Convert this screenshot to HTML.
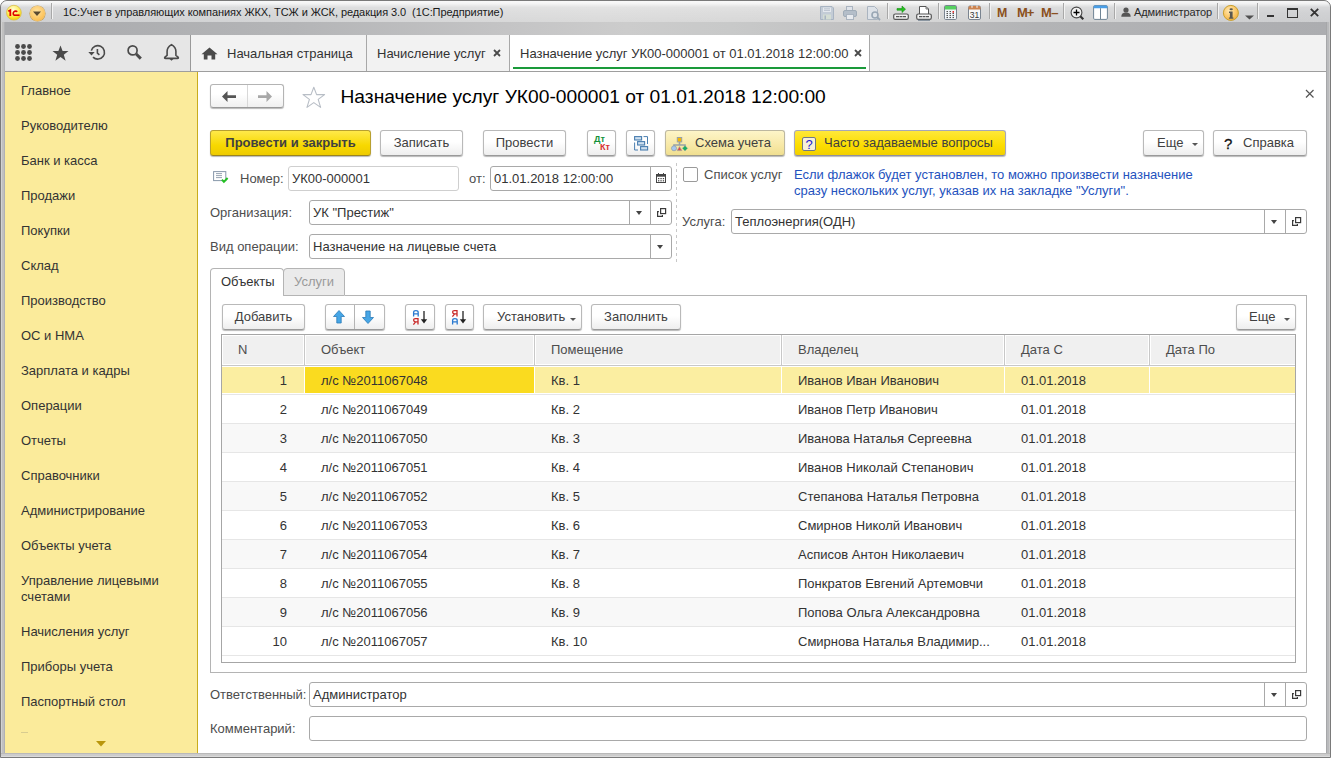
<!DOCTYPE html>
<html><head><meta charset="utf-8">
<style>
*{margin:0;padding:0;box-sizing:border-box}
html,body{width:1331px;height:758px;overflow:hidden;background:#fff}
body{position:relative;font-family:"Liberation Sans",sans-serif;font-size:13px;color:#4d4d4d}
.a{position:absolute}
.t{position:absolute;white-space:nowrap;line-height:15px}
svg{position:absolute;overflow:visible}
#frame{left:0;top:0;width:1331px;height:758px;background:#c0c0c0;border:1px solid #7a7a7a;border-radius:7px 7px 0 0}
#tb{left:1px;top:1px;width:1329px;height:21px;background:linear-gradient(rgba(255,255,255,0.85),rgba(255,255,255,0.7) 12%,rgba(255,255,255,0.15) 30%,rgba(255,255,255,0) 60%,rgba(0,0,0,0.02)),linear-gradient(90deg,#d2d3d5,#d8d9da 25%,#dedede 45%,#dadada 65%,#d4d5d6 85%,#d0d1d3);border-radius:6px 6px 0 0}
#tb2{left:5px;top:22px;width:1321px;height:13px;background:linear-gradient(90deg,#a9aaad,#b4b5b7 22%,#c4c4c5 38%,#cccccc 47%,#c8c9c9 55%,#c0c0c1 66%,#b3b4b6 78%,#acadb0 100%)}
.side-it{position:absolute;left:21px;white-space:nowrap;line-height:15px;color:#333}
.tsep{position:absolute;top:3px;width:2px;height:16px;border-left:1px solid #a8a8a8;border-right:1px solid #f2f2f2}

.btn{position:absolute;top:130px;height:26px;border:1px solid #b9b9b9;border-bottom-color:#9a9a9a;border-radius:3px;background:linear-gradient(#ffffff 45%,#eeeeee);box-shadow:0 1px 1px rgba(0,0,0,0.28);line-height:24px;text-align:center;white-space:nowrap;color:#404040}
.btn.y{background:linear-gradient(#ffe94a,#f7d800 60%,#eecb00);border-color:#b8a030 #b8a030 #9a8420;color:#404040;font-weight:bold}
.btn.ly{background:linear-gradient(#fdf5c8,#f7e8a6 60%,#f0df90);border-color:#bdb8a0 #bdb8a0 #9e9a88}
.btn.yy{background:linear-gradient(#ffe83a,#fcdd00 60%,#f2d000);border-color:#a8a8b8 #a8a8b8 #9090a0}
.dd{position:absolute;width:0;height:0;border-left:3px solid transparent;border-right:3px solid transparent;border-top:3.5px solid #555}

.fld{position:absolute;height:25px;border:1px solid #a9a9a9;border-radius:3px;background:#fff}
.fdiv{position:absolute;width:1px;background:#a9a9a9}
.lbl{position:absolute;white-space:nowrap;line-height:15px;color:#4d4d4d}
.ftx{position:absolute;white-space:nowrap;line-height:15px;color:#333}
.tri{position:absolute;width:0;height:0;border-left:4px solid transparent;border-right:4px solid transparent;border-top:4px solid #444}
</style></head><body>
<div id="frame" class="a"></div>
<div class="a" style="left:1px;top:6px;width:1px;height:751px;background:#d2d2d2"></div>
<div class="a" style="left:2px;top:6px;width:2px;height:751px;background:#c0c0c0"></div>
<div class="a" style="left:4px;top:22px;width:1px;height:735px;background:#b0b1b4"></div>
<div class="a" style="left:1326px;top:22px;width:1px;height:735px;background:#a6a7a9"></div>
<div class="a" style="left:1327px;top:6px;width:2px;height:751px;background:#b9babc"></div>
<div class="a" style="left:1329px;top:6px;width:1px;height:751px;background:#cbcbcb"></div>
<div class="a" style="left:1px;top:753px;width:1329px;height:1px;background:#b9b9b9"></div>
<div class="a" style="left:1px;top:754px;width:1329px;height:2px;background:#cccccc"></div>
<div class="a" style="left:1px;top:756px;width:1329px;height:1px;background:#dadada"></div>
<div id="tb" class="a"></div>
<div id="tb2" class="a"></div>
<!-- content white -->
<div class="a" style="left:5px;top:35px;width:1321px;height:718px;background:#fff"></div>

<!-- title bar -->
<svg style="left:4px;top:3px" width="20" height="20"><defs><radialGradient id="lg" cx="45%" cy="30%" r="70%"><stop offset="0" stop-color="#fffde0"/><stop offset="0.55" stop-color="#fff060"/><stop offset="1" stop-color="#f5d000"/></radialGradient></defs><circle cx="9.9" cy="9.7" r="7.4" fill="url(#lg)" stroke="#d8bc50" stroke-width="0.8"/><path d="M4.3 8.2L6.3 7.2V12.9" fill="none" stroke="#e00000" stroke-width="1.8"/><path d="M13.3 8.8A2.3 2.3 0 1 0 9.9 12.1" fill="none" stroke="#e00000" stroke-width="1.6"/><path d="M9.6 12.2H15.6" stroke="#e00000" stroke-width="1.6"/></svg>
<div class="a" style="left:29.5px;top:5.5px;width:15px;height:15px;border-radius:50%;background:radial-gradient(circle at 45% 35%,#ffe2a0,#fcc35a 65%,#f3ad3a);box-shadow:0 0 0 0.6px #caa050"></div>
<svg style="left:32px;top:11px" width="10" height="6"><path d="M1 0.5H9L5 5z" fill="#5a4a30"/></svg>
<div class="tsep" style="left:51px"></div>
<div class="t" style="left:63px;top:6px;font-size:11px;line-height:13px;color:#1a1a1a;letter-spacing:-0.07px">1С:Учет в управляющих компаниях ЖКХ, ТСЖ и ЖСК, редакция 3.0&nbsp; (1С:Предприятие)</div>

<!-- section panel -->
<div class="a" style="left:5px;top:35px;width:185px;height:36px;background:#e6e6e6"></div>
<div class="a" style="left:190px;top:35px;width:1px;height:36px;background:#9a9a9a"></div>
<div class="a" style="left:191px;top:35px;width:1135px;height:36px;background:#f2f2f2"></div>
<div class="a" style="left:5px;top:71px;width:1321px;height:1px;background:#9e9e9e"></div>

<!-- sidebar -->
<div class="a" style="left:5px;top:72px;width:192px;height:681px;background:#fbeb9b"></div>
<div class="a" style="left:197px;top:72px;width:1px;height:681px;background:#c9ac1c"></div>
<div class="side-it" style="top:83px">Главное</div>
<div class="side-it" style="top:118px">Руководителю</div>
<div class="side-it" style="top:153px">Банк и касса</div>
<div class="side-it" style="top:188px">Продажи</div>
<div class="side-it" style="top:223px">Покупки</div>
<div class="side-it" style="top:258px">Склад</div>
<div class="side-it" style="top:293px">Производство</div>
<div class="side-it" style="top:328px">ОС и НМА</div>
<div class="side-it" style="top:363px">Зарплата и кадры</div>
<div class="side-it" style="top:398px">Операции</div>
<div class="side-it" style="top:433px">Отчеты</div>
<div class="side-it" style="top:468px">Справочники</div>
<div class="side-it" style="top:503px">Администрирование</div>
<div class="side-it" style="top:538px">Объекты учета</div>
<div class="side-it" style="top:573px">Управление лицевыми</div>
<div class="side-it" style="top:589px">счетами</div>
<div class="side-it" style="top:624px">Начисления услуг</div>
<div class="side-it" style="top:659px">Приборы учета</div>
<div class="side-it" style="top:694px">Паспортный стол</div>
<div class="a" style="left:21px;top:732px;width:7px;height:1px;background:#d8cc90"></div>
<svg style="left:96px;top:741px" width="10" height="6"><path d="M0 0H10L5 5.5z" fill="#b9960c"/></svg>
<!-- section icons -->
<svg style="left:15px;top:44px" width="18" height="18"><g fill="#4a4a4a">
<circle cx="2.5" cy="2.5" r="2.4"/><circle cx="8.5" cy="2.5" r="2.4"/><circle cx="14.5" cy="2.5" r="2.4"/>
<circle cx="2.5" cy="8.5" r="2.4"/><circle cx="8.5" cy="8.5" r="2.4"/><circle cx="14.5" cy="8.5" r="2.4"/>
<circle cx="2.5" cy="14.5" r="2.4"/><circle cx="8.5" cy="14.5" r="2.4"/><circle cx="14.5" cy="14.5" r="2.4"/></g></svg>
<svg style="left:52px;top:45px" width="17" height="17"><path d="M8.5 0.5L10.6 6.1H16.5L11.8 9.7L13.6 15.8L8.5 12L3.4 15.8L5.2 9.7L0.5 6.1H6.4z" fill="#4a4a4a"/></svg>
<svg style="left:87px;top:44px" width="19" height="17"><path d="M4.3 6.6A6.7 6.7 0 1 1 6 13.1" fill="none" stroke="#4a4a4a" stroke-width="1.6"/><path d="M10.4 5V9.2L12.4 10.8" fill="none" stroke="#4a4a4a" stroke-width="1.6"/><path d="M1.3 7.9H7.7L4.5 11.6z" fill="#4a4a4a"/></svg>
<svg style="left:127px;top:45px" width="16" height="16"><circle cx="5.6" cy="5.4" r="4.5" fill="none" stroke="#4a4a4a" stroke-width="1.7"/><path d="M9.2 9L13.8 13.6" stroke="#4a4a4a" stroke-width="3"/></svg>
<svg style="left:163px;top:43px" width="17" height="19"><path d="M8.5 1.6C5.6 3.4 4.1 5.2 4.1 8.2V12.4L1.9 14.1Q1.1 15.4 2.6 15.4H14.4Q15.9 15.4 15.1 14.1L12.9 12.4V8.2C12.9 5.2 11.4 3.4 8.5 1.6z" fill="none" stroke="#4a4a4a" stroke-width="1.6" stroke-linejoin="round"/><path d="M6.3 15.8H10.7L8.5 17.8z" fill="#4a4a4a"/></svg>

<!-- open tabs -->
<svg style="left:201px;top:47px" width="17" height="13"><path d="M8.5 0.5L16.5 7.3H14.2V12.5H10.5V8.5H6.5V12.5H2.8V7.3H0.5z" fill="#4a4a4a"/></svg>
<div class="t" style="left:227px;top:46px;color:#333">Начальная страница</div>
<div class="a" style="left:366px;top:35px;width:1px;height:36px;background:#a8a8a8"></div>
<div class="t" style="left:377px;top:46px;color:#333">Начисление услуг</div>
<svg style="left:493px;top:49px" width="8" height="8"><path d="M1 1L7 7M7 1L1 7" stroke="#4a4a4a" stroke-width="1.8"/></svg>
<div class="a" style="left:509px;top:35px;width:1px;height:36px;background:#a8a8a8"></div>
<div class="a" style="left:510px;top:35px;width:359px;height:36px;background:#fff"></div>
<div class="a" style="left:869px;top:35px;width:1px;height:36px;background:#a8a8a8"></div>
<div class="t" style="left:520px;top:46px;color:#333">Назначение услуг УК00-000001 от 01.01.2018 12:00:00</div>
<svg style="left:854px;top:49px" width="8" height="8"><path d="M1 1L7 7M7 1L1 7" stroke="#4a4a4a" stroke-width="1.8"/></svg>
<div class="a" style="left:513px;top:67px;width:353px;height:2px;background:#1a9a3a"></div>
<!-- title bar right icons -->
<svg style="left:820px;top:6px" width="14" height="14"><path d="M0.5 0.5H12L13.5 2V13.5H0.5z" fill="#c3ccd6" stroke="#a8b4c2"/><rect x="3" y="1.5" width="8" height="4.5" fill="#e4e8ee"/><path d="M4 2.8H10M4 4.4H10" stroke="#b0bac6" stroke-width="0.8"/><rect x="3" y="8.5" width="8" height="5" fill="#d4ddd4"/><rect x="4.5" y="9.5" width="1.5" height="4" fill="#a8b4c2"/></svg>
<svg style="left:843px;top:6px" width="14" height="14"><rect x="3.5" y="0.5" width="6" height="4" fill="#e0e4ea" stroke="#aab4c0"/><rect x="0.5" y="4.5" width="13" height="6" rx="1.5" fill="#b4bec9" stroke="#a0acb8"/><rect x="3.5" y="8.5" width="7" height="5" fill="#e8ebef" stroke="#aab4c0"/></svg>
<svg style="left:867px;top:6px" width="15" height="15"><path d="M0.5 0.5H7.5L10.5 3.5V13.5H0.5z" fill="#dde2e8" stroke="#aab4c0"/><circle cx="8" cy="9" r="3" fill="none" stroke="#98a6b4" stroke-width="1.6"/><path d="M10.2 11.2L13 14" stroke="#98a6b4" stroke-width="1.8"/></svg>
<div class="tsep" style="left:887px"></div>
<svg style="left:893px;top:5px" width="16" height="15"><path d="M4 3.5H9V1L12.5 4.2L9 7.5V5.2H4z" fill="#28c020" stroke="#109010" stroke-width="0.6"/><rect x="0.7" y="9" width="14.6" height="5.3" rx="1.6" fill="#f4f4f4" stroke="#555" stroke-width="1.2"/><path d="M3 11.6H6M10 11.6H13M6.5 11.6H9.5" stroke="#555" stroke-width="1.2"/></svg>
<svg style="left:916px;top:6px" width="16" height="15"><path d="M3.5 0.5H10L12.5 3V8.5H3.5z" fill="#fff" stroke="#555"/><path d="M10 0.5V3H12.5" fill="none" stroke="#555" stroke-width="0.8"/><rect x="0.7" y="8" width="14.6" height="5.3" rx="1.6" fill="#f4f4f4" stroke="#555" stroke-width="1.2"/><path d="M3 10.6H6M10 10.6H13M6.5 10.6H9.5" stroke="#555" stroke-width="1.2"/><path d="M2 14.2H14" stroke="#6a7a8a" stroke-width="1"/></svg>
<div class="tsep" style="left:938px"></div>
<svg style="left:944px;top:5px" width="13" height="15"><rect x="0.5" y="0.5" width="12" height="14" rx="1.2" fill="#f2f6fa" stroke="#7a8490"/><rect x="1" y="1" width="11" height="3.5" fill="#56d060"/><rect x="2.5" y="6" width="1.5" height="1.1" fill="#555"/><rect x="5.5" y="6" width="1.5" height="1.1" fill="#555"/><rect x="8.5" y="6" width="1.5" height="1.8" fill="#e03030"/><rect x="2.5" y="8" width="1.5" height="1.1" fill="#555"/><rect x="5.5" y="8" width="1.5" height="1.1" fill="#555"/><rect x="8.5" y="8" width="1.5" height="1.1" fill="#555"/><rect x="2.5" y="10" width="1.5" height="1.1" fill="#555"/><rect x="5.5" y="10" width="1.5" height="1.1" fill="#555"/><rect x="8.5" y="10" width="1.5" height="1.1" fill="#555"/><rect x="2.5" y="12" width="1.5" height="1.1" fill="#555"/><rect x="5.5" y="12" width="1.5" height="1.1" fill="#555"/><rect x="8.5" y="12" width="1.5" height="1.1" fill="#555"/></svg>
<svg style="left:968px;top:5px" width="13" height="15"><rect x="0.5" y="1" width="12" height="13.5" rx="1.5" fill="#f8f8f8" stroke="#7a8490"/><path d="M0.5 4.5V2.5Q0.5 1 2 1H11Q12.5 1 12.5 2.5V4.5z" fill="#cc8450"/><path d="M4 0.5V2.8M9 0.5V2.8" stroke="#fff" stroke-width="1"/><text x="6.6" y="12.6" font-family="Liberation Sans" font-size="8.6" text-anchor="middle" fill="#3a3a3a">31</text></svg>
<div class="tsep" style="left:989px"></div>
<div class="t" style="left:997px;top:5px;font:bold 13px/15px 'Liberation Sans';color:#8a5020;transform:scaleX(0.95);transform-origin:left">M</div>
<div class="t" style="left:1017px;top:5px;font:bold 13px/15px 'Liberation Sans';color:#8a5020;letter-spacing:-1px">M+</div>
<div class="t" style="left:1041px;top:5px;font:bold 13px/15px 'Liberation Sans';color:#8a5020;letter-spacing:-0.5px">M–</div>
<div class="tsep" style="left:1063px"></div>
<svg style="left:1070px;top:6px" width="16" height="16"><circle cx="6.5" cy="6.5" r="5.4" fill="#f2f2f2" stroke="#484848" stroke-width="1.1"/><path d="M3.5 6.5H9.5M6.5 3.5V9.5" stroke="#000" stroke-width="1.3"/><path d="M10.3 10.3L13.3 13.3" stroke="#333" stroke-width="2.2"/></svg>
<svg style="left:1093px;top:5px" width="15" height="15"><rect x="0.6" y="0.6" width="13.8" height="13.8" rx="1.2" fill="#fff" stroke="#6f8494" stroke-width="1"/><path d="M0.6 3.2V1.8Q0.6 0.4 2 0.4H13Q14.4 0.4 14.4 1.8V3.2z" fill="#4a9ee6"/><path d="M7.5 3.2V14" stroke="#6f8494" stroke-width="1"/></svg>
<div class="tsep" style="left:1114px"></div>
<svg style="left:1121px;top:7px" width="10" height="10"><circle cx="5" cy="3" r="2.6" fill="#555"/><path d="M0.3 9.8C0.3 6.8 2 5.6 5 5.6S9.7 6.8 9.7 9.8z" fill="#555"/></svg>
<div class="t" style="left:1134px;top:6px;font-size:11px;line-height:13px;color:#2a2a2a;letter-spacing:-0.1px">Администратор</div>
<div class="tsep" style="left:1217px"></div>
<svg style="left:1222px;top:4px" width="18" height="18"><defs><radialGradient id="ig" cx="40%" cy="35%" r="70%"><stop offset="0" stop-color="#ffe8b4"/><stop offset="0.6" stop-color="#fbc868"/><stop offset="1" stop-color="#f2b040"/></radialGradient></defs><circle cx="8.9" cy="8.9" r="7.5" fill="url(#ig)" stroke="#c8a030" stroke-width="1"/><ellipse cx="9.2" cy="5.2" rx="1.7" ry="1" fill="#5a5850"/><path d="M7 7.6H10.6V13.4H11.4V14.8H6.9V13.4H7.9V9H7z" fill="#5a5850"/></svg>
<svg style="left:1245px;top:15px" width="9" height="5"><path d="M0 0.5H9L4.5 4.5z" fill="#505050"/></svg>
<div class="tsep" style="left:1257px"></div>
<div class="a" style="left:1267px;top:15px;width:7px;height:2px;background:#333"></div>
<div class="a" style="left:1287px;top:8px;width:11px;height:10px;border:1px solid #333;border-top-width:2px"></div>
<svg style="left:1310px;top:8px" width="9" height="9"><path d="M0.8 0.8L8.2 8.2M8.2 0.8L0.8 8.2" stroke="#333" stroke-width="1.8"/></svg>
<!-- form header -->
<div class="a" style="left:210px;top:84px;width:74px;height:24px;border:1px solid #b4b4b4;border-bottom-color:#999;border-radius:3px;background:linear-gradient(#fff 40%,#f0f0f0);box-shadow:0 1px 1px rgba(0,0,0,0.28)"></div>
<div class="a" style="left:247px;top:85px;width:1px;height:22px;background:#d8d8d8"></div>
<svg style="left:222px;top:91px" width="14" height="12"><path d="M0 5.5L5.5 0V4.2H14V7H5.5V11z" fill="#555"/></svg>
<svg style="left:258px;top:91px" width="14" height="12"><path d="M14 5.5L8.5 0V4.2H0V7H8.5V11z" fill="#a8a8a8"/></svg>
<svg style="left:302px;top:86px" width="24" height="23"><path d="M11.8 1.2L14.6 8.6H22.6L16.2 13.4L18.6 21.4L11.8 16.6L5 21.4L7.4 13.4L1 8.6H9z" fill="#fff" stroke="#b8bec6" stroke-width="1.1" stroke-linejoin="round"/></svg>
<div class="t" style="left:340.5px;top:86px;font-size:19.22px;line-height:22px;color:#000">Назначение услуг УК00-000001 от 01.01.2018 12:00:00</div>
<svg style="left:1305px;top:89px" width="10" height="10"><path d="M1 1L8.5 8.5M8.5 1L1 8.5" stroke="#555" stroke-width="1.2"/></svg>

<!-- command bar -->
<div class="btn y" style="left:210px;width:161px">Провести и закрыть</div>
<div class="btn" style="left:380px;width:83px">Записать</div>
<div class="btn" style="left:483px;width:83px">Провести</div>
<div class="btn" style="left:587px;width:29px"></div>
<div class="t" style="left:594px;top:134px;font:bold 9px/10px 'Liberation Sans';color:#13923a">Дт</div>
<div class="t" style="left:600px;top:142px;font:bold 9px/10px 'Liberation Sans';color:#d83030">Кт</div>
<div class="btn" style="left:626px;width:29px"></div>
<svg style="left:634px;top:136px" width="16" height="15"><g fill="#cfe0f0" stroke="#4a7eb0" stroke-width="1.1"><rect x="0.6" y="0.6" width="7" height="3.4"/><rect x="3.6" y="5.6" width="7" height="3.4"/><rect x="6.6" y="10.6" width="7" height="3.4"/></g><path d="M0.6 6.5V14H4M9.5 0.6H13.5V8" fill="none" stroke="#4a7eb0" stroke-width="1"/></svg>
<div class="btn ly" style="left:665px;width:120px;text-align:left;padding-left:29px">Схема учета</div>
<svg style="left:671px;top:137px" width="18" height="14"><path d="M8.5 4.5V8M3 10.5V8H14V10.5" fill="none" stroke="#98a2a6" stroke-width="1.6"/><rect x="6.3" y="0.5" width="4.4" height="4.4" fill="#f6b800" stroke="#98a2a6" stroke-width="1"/><circle cx="3" cy="11.3" r="2.5" fill="#a8c8ee" stroke="#8a98a8" stroke-width="0.7"/><path d="M6.2 13.6L8.5 9.6L10.8 13.6z" fill="#e04848" stroke="#98a2a6" stroke-width="0.6"/><path d="M14 8.7L16.6 11.3L14 13.9L11.4 11.3z" fill="#18b060" stroke="#98a2a6" stroke-width="0.5"/></svg>
<div class="btn yy" style="left:794px;width:212px;text-align:left;padding-left:29px">Часто задаваемые вопросы</div>
<div class="a" style="left:802px;top:137px;width:14px;height:14px;border:1px solid #707888;border-radius:2px;background:#f8f0d8"></div>
<div class="t" style="left:802px;top:137px;width:14px;text-align:center;color:#2020d0;font-size:13px;line-height:15px">?</div>
<div class="btn" style="left:1143px;width:61px;text-align:left;padding-left:13px">Еще</div>
<div class="dd" style="left:1192px;top:143px"></div>
<div class="btn" style="left:1213px;width:94px;text-align:left;padding-left:29px">Справка</div>
<div class="t" style="left:1224px;top:136px;font:15px/16px 'Liberation Sans';color:#111;-webkit-text-stroke:0.3px #111">?</div>
<!-- fields -->
<svg style="left:213px;top:171px" width="16" height="13"><rect x="0.6" y="0.6" width="12.2" height="9" fill="#fff" stroke="#8898aa" stroke-width="1"/><path d="M3 2.6H9M3 4.6H9M3 6.6H9" stroke="#8c9aaa" stroke-width="0.9"/><path d="M8.9 8.7L10.9 10.9L14.6 7" fill="none" stroke="#22c022" stroke-width="2"/></svg>
<div class="lbl" style="left:240px;top:171px">Номер:</div>
<div class="fld" style="left:288px;top:166px;width:171px;border-color:#cfcfcf"></div>
<div class="ftx" style="left:292px;top:171px">УК00-000001</div>
<div class="lbl" style="left:469px;top:171px">от:</div>
<div class="fld" style="left:490px;top:166px;width:182px"></div>
<div class="fdiv" style="left:650px;top:167px;height:23px"></div>
<div class="ftx" style="left:494px;top:171px">01.01.2018 12:00:00</div>
<svg style="left:656px;top:173px" width="10" height="10"><rect x="0.5" y="1.5" width="9" height="8" fill="#fff" stroke="#444"/><rect x="0.5" y="1.5" width="9" height="2.2" fill="#444"/><path d="M2.5 0V2M7.5 0V2" stroke="#444"/><g fill="#444"><rect x="2" y="5" width="1.3" height="1.2"/><rect x="4.4" y="5" width="1.3" height="1.2"/><rect x="6.8" y="5" width="1.3" height="1.2"/><rect x="2" y="7.2" width="1.3" height="1.2"/><rect x="4.4" y="7.2" width="1.3" height="1.2"/><rect x="6.8" y="7.2" width="1.3" height="1.2"/></g></svg>

<div class="lbl" style="left:210px;top:205px">Организация:</div>
<div class="fld" style="left:309px;top:200px;width:363px"></div>
<div class="fdiv" style="left:629px;top:201px;height:23px"></div>
<div class="fdiv" style="left:650px;top:201px;height:23px"></div>
<div class="ftx" style="left:313px;top:205px">УК "Престиж"</div>
<div class="tri" style="left:636px;top:211px;border-width:4px 3.5px 0"></div>
<svg style="left:657px;top:208px" width="10" height="10"><rect x="3.6" y="0.6" width="5" height="5" fill="none" stroke="#3a3a3a" stroke-width="1.2"/><path d="M1.9 3.6H0.6V8.4H5.4V7" fill="none" stroke="#3a3a3a" stroke-width="1.2"/></svg>

<div class="lbl" style="left:210px;top:239px">Вид операции:</div>
<div class="fld" style="left:309px;top:234px;width:363px"></div>
<div class="fdiv" style="left:650px;top:235px;height:23px"></div>
<div class="ftx" style="left:313px;top:239px">Назначение на лицевые счета</div>
<div class="tri" style="left:657px;top:245px;border-width:4px 3.5px 0"></div>

<div class="a" style="left:676px;top:163px;width:1px;height:100px;background:repeating-linear-gradient(#c8c8c8 0 3px,transparent 3px 6px)"></div>
<div class="a" style="left:683px;top:167px;width:15px;height:15px;border:1px solid #9a9a9a;border-radius:2px;background:#fff"></div>
<div class="lbl" style="left:704px;top:167px">Список услуг</div>
<div class="t" style="left:794px;top:167px;color:#2452be;line-height:16px">Если флажок будет установлен, то можно произвести назначение<br>сразу нескольких услуг, указав их на закладке "Услуги".</div>

<div class="lbl" style="left:682px;top:214px">Услуга:</div>
<div class="fld" style="left:731px;top:209px;width:576px"></div>
<div class="fdiv" style="left:1264px;top:210px;height:23px"></div>
<div class="fdiv" style="left:1285px;top:210px;height:23px"></div>
<div class="ftx" style="left:735px;top:214px">Теплоэнергия(ОДН)</div>
<div class="tri" style="left:1271px;top:220px;border-width:4px 3.5px 0"></div>
<svg style="left:1292px;top:217px" width="10" height="10"><rect x="3.6" y="0.6" width="5" height="5" fill="none" stroke="#3a3a3a" stroke-width="1.2"/><path d="M1.9 3.6H0.6V8.4H5.4V7" fill="none" stroke="#3a3a3a" stroke-width="1.2"/></svg>
<!-- tab panel -->
<div class="a" style="left:210px;top:295px;width:1097px;height:378px;border:1px solid #b4b4b4;border-top:none"></div>
<div class="a" style="left:345px;top:295px;width:962px;height:1px;background:#b4b4b4"></div>
<div class="a" style="left:210px;top:268px;width:74px;height:28px;border:1px solid #b4b4b4;border-bottom:none;border-radius:4px 4px 0 0;background:#fff"></div>
<div class="a" style="left:283px;top:268px;width:62px;height:28px;border:1px solid #b4b4b4;border-radius:4px 4px 0 0;background:#ebebeb"></div>
<div class="lbl" style="left:221px;top:274px;color:#333">Объекты</div>
<div class="lbl" style="left:294px;top:274px;color:#9a9a9a">Услуги</div>
<!-- table toolbar -->
<div class="btn" style="left:222px;top:304px;width:83px">Добавить</div>
<div class="btn" style="left:325px;top:304px;width:60px"></div>
<div class="a" style="left:354px;top:305px;width:1px;height:24px;background:#b4b4b4"></div>
<svg style="left:333px;top:310px" width="12" height="14"><path d="M6 0.5L11.5 6.5H8.2V13H3.8V6.5H0.5z" fill="#46a6e6" stroke="#2a7ab8" stroke-width="0.8"/></svg>
<svg style="left:362px;top:310px" width="12" height="14"><path d="M6 13.5L11.5 7.5H8.2V1H3.8V7.5H0.5z" fill="#46a6e6" stroke="#2a7ab8" stroke-width="0.8"/></svg>
<div class="btn" style="left:405px;top:304px;width:30px"></div>
<svg style="left:413px;top:309px" width="17" height="17"><path d="M0.6 7.5V3.4Q0.6 1.6 2.9 1.6Q5.2 1.6 5.2 3.4V7.5M0.6 4.8H5.2" fill="none" stroke="#2a7ad0" stroke-width="1.3"/><path d="M5 15.5V9.6H2.4Q0.6 9.6 0.6 11.1Q0.6 12.8 2.4 12.8H5M2.6 12.9L0.4 15.6" fill="none" stroke="#c82828" stroke-width="1.3"/><path d="M11 2V13" stroke="#222" stroke-width="1.3"/><path d="M7.8 10.2H14.2L11 14.6z" fill="#222"/></svg>
<div class="btn" style="left:445px;top:304px;width:29px"></div>
<svg style="left:452px;top:309px" width="17" height="17"><path d="M5 7.5V1.6H2.4Q0.6 1.6 0.6 3.1Q0.6 4.8 2.4 4.8H5M2.6 4.9L0.4 7.6" fill="none" stroke="#c82828" stroke-width="1.3"/><path d="M0.6 15.5V11.4Q0.6 9.6 2.9 9.6Q5.2 9.6 5.2 11.4V15.5M0.6 12.8H5.2" fill="none" stroke="#2a7ad0" stroke-width="1.3"/><path d="M11 2V13" stroke="#222" stroke-width="1.3"/><path d="M7.8 10.2H14.2L11 14.6z" fill="#222"/></svg>
<div class="btn" style="left:483px;top:304px;width:99px;text-align:left;padding-left:13px">Установить</div>
<div class="dd" style="left:570px;top:318px"></div>
<div class="btn" style="left:591px;top:304px;width:90px">Заполнить</div>
<div class="btn" style="left:1236px;top:304px;width:60px;text-align:left;padding-left:12px">Еще</div>
<div class="dd" style="left:1284px;top:318px"></div>
<!-- table -->
<div class="a" style="left:221px;top:334px;width:1075px;height:329px;border:1px solid #a6a6a6;background:#fff"></div>
<div class="a" style="left:222px;top:335px;width:1073px;height:31px;background:#f0f0f0;border-bottom:1px solid #c8c8c8;box-shadow:inset 0 1px #fff,inset 0 -1px #fff,inset 1px 0 #fff"></div>

<div class="a" style="left:303px;top:335px;width:3px;height:30px;background:#fff;border-left:1px solid #fff;border-right:1px solid #fff"></div><div class="a" style="left:304px;top:335px;width:1px;height:30px;background:#c8c8c8"></div>

<div class="a" style="left:533px;top:335px;width:3px;height:30px;background:#fff;border-left:1px solid #fff;border-right:1px solid #fff"></div><div class="a" style="left:534px;top:335px;width:1px;height:30px;background:#c8c8c8"></div>

<div class="a" style="left:780px;top:335px;width:3px;height:30px;background:#fff;border-left:1px solid #fff;border-right:1px solid #fff"></div><div class="a" style="left:781px;top:335px;width:1px;height:30px;background:#c8c8c8"></div>

<div class="a" style="left:1003px;top:335px;width:3px;height:30px;background:#fff;border-left:1px solid #fff;border-right:1px solid #fff"></div><div class="a" style="left:1004px;top:335px;width:1px;height:30px;background:#c8c8c8"></div>

<div class="a" style="left:1148px;top:335px;width:3px;height:30px;background:#fff;border-left:1px solid #fff;border-right:1px solid #fff"></div><div class="a" style="left:1149px;top:335px;width:1px;height:30px;background:#c8c8c8"></div>

<div class="lbl" style="left:238px;top:342px">N</div>
<div class="lbl" style="left:321px;top:342px">Объект</div>
<div class="lbl" style="left:551px;top:342px">Помещение</div>
<div class="lbl" style="left:798px;top:342px">Владелец</div>
<div class="lbl" style="left:1021px;top:342px">Дата С</div>
<div class="lbl" style="left:1166px;top:342px">Дата По</div>
<div class="a" style="left:222px;top:367px;width:1073px;height:26px;background:#fbeea1"></div>
<div class="a" style="left:305px;top:367px;width:229px;height:26px;background:#fadb1f"></div>
<div class="a" style="left:304px;top:367px;width:1px;height:26px;background:#fff"></div>
<div class="a" style="left:534px;top:367px;width:1px;height:26px;background:#fff"></div>
<div class="a" style="left:781px;top:367px;width:1px;height:26px;background:#fff"></div>
<div class="a" style="left:1004px;top:367px;width:1px;height:26px;background:#fff"></div>
<div class="a" style="left:1149px;top:367px;width:1px;height:26px;background:#fff"></div>
<div class="a" style="left:222px;top:394px;width:1073px;height:1px;background:#e6e6e6"></div>
<div class="ftx" style="left:223px;width:64px;text-align:right;top:373px">1</div>
<div class="ftx" style="left:321px;top:373px">л/с №2011067048</div>
<div class="ftx" style="left:551px;top:373px">Кв. 1</div>
<div class="ftx" style="left:798px;top:373px">Иванов Иван Иванович</div>
<div class="ftx" style="left:1021px;top:373px">01.01.2018</div>
<div class="a" style="left:222px;top:423px;width:1073px;height:1px;background:#e6e6e6"></div>
<div class="ftx" style="left:223px;width:64px;text-align:right;top:402px">2</div>
<div class="ftx" style="left:321px;top:402px">л/с №2011067049</div>
<div class="ftx" style="left:551px;top:402px">Кв. 2</div>
<div class="ftx" style="left:798px;top:402px">Иванов Петр Иванович</div>
<div class="ftx" style="left:1021px;top:402px">01.01.2018</div>
<div class="a" style="left:222px;top:424px;width:1073px;height:28px;background:#f8f8f8"></div>
<div class="a" style="left:222px;top:452px;width:1073px;height:1px;background:#e6e6e6"></div>
<div class="ftx" style="left:223px;width:64px;text-align:right;top:431px">3</div>
<div class="ftx" style="left:321px;top:431px">л/с №2011067050</div>
<div class="ftx" style="left:551px;top:431px">Кв. 3</div>
<div class="ftx" style="left:798px;top:431px">Иванова Наталья Сергеевна</div>
<div class="ftx" style="left:1021px;top:431px">01.01.2018</div>
<div class="a" style="left:222px;top:481px;width:1073px;height:1px;background:#e6e6e6"></div>
<div class="ftx" style="left:223px;width:64px;text-align:right;top:460px">4</div>
<div class="ftx" style="left:321px;top:460px">л/с №2011067051</div>
<div class="ftx" style="left:551px;top:460px">Кв. 4</div>
<div class="ftx" style="left:798px;top:460px">Иванов Николай Степанович</div>
<div class="ftx" style="left:1021px;top:460px">01.01.2018</div>
<div class="a" style="left:222px;top:482px;width:1073px;height:28px;background:#f8f8f8"></div>
<div class="a" style="left:222px;top:510px;width:1073px;height:1px;background:#e6e6e6"></div>
<div class="ftx" style="left:223px;width:64px;text-align:right;top:489px">5</div>
<div class="ftx" style="left:321px;top:489px">л/с №2011067052</div>
<div class="ftx" style="left:551px;top:489px">Кв. 5</div>
<div class="ftx" style="left:798px;top:489px">Степанова Наталья Петровна</div>
<div class="ftx" style="left:1021px;top:489px">01.01.2018</div>
<div class="a" style="left:222px;top:539px;width:1073px;height:1px;background:#e6e6e6"></div>
<div class="ftx" style="left:223px;width:64px;text-align:right;top:518px">6</div>
<div class="ftx" style="left:321px;top:518px">л/с №2011067053</div>
<div class="ftx" style="left:551px;top:518px">Кв. 6</div>
<div class="ftx" style="left:798px;top:518px">Смирнов Николй Иванович</div>
<div class="ftx" style="left:1021px;top:518px">01.01.2018</div>
<div class="a" style="left:222px;top:540px;width:1073px;height:28px;background:#f8f8f8"></div>
<div class="a" style="left:222px;top:568px;width:1073px;height:1px;background:#e6e6e6"></div>
<div class="ftx" style="left:223px;width:64px;text-align:right;top:547px">7</div>
<div class="ftx" style="left:321px;top:547px">л/с №2011067054</div>
<div class="ftx" style="left:551px;top:547px">Кв. 7</div>
<div class="ftx" style="left:798px;top:547px">Асписов Антон Николаевич</div>
<div class="ftx" style="left:1021px;top:547px">01.01.2018</div>
<div class="a" style="left:222px;top:597px;width:1073px;height:1px;background:#e6e6e6"></div>
<div class="ftx" style="left:223px;width:64px;text-align:right;top:576px">8</div>
<div class="ftx" style="left:321px;top:576px">л/с №2011067055</div>
<div class="ftx" style="left:551px;top:576px">Кв. 8</div>
<div class="ftx" style="left:798px;top:576px">Понкратов Евгений Артемовчи</div>
<div class="ftx" style="left:1021px;top:576px">01.01.2018</div>
<div class="a" style="left:222px;top:598px;width:1073px;height:28px;background:#f8f8f8"></div>
<div class="a" style="left:222px;top:626px;width:1073px;height:1px;background:#e6e6e6"></div>
<div class="ftx" style="left:223px;width:64px;text-align:right;top:605px">9</div>
<div class="ftx" style="left:321px;top:605px">л/с №2011067056</div>
<div class="ftx" style="left:551px;top:605px">Кв. 9</div>
<div class="ftx" style="left:798px;top:605px">Попова Ольга Александровна</div>
<div class="ftx" style="left:1021px;top:605px">01.01.2018</div>
<div class="a" style="left:222px;top:655px;width:1073px;height:1px;background:#e6e6e6"></div>
<div class="ftx" style="left:223px;width:64px;text-align:right;top:634px">10</div>
<div class="ftx" style="left:321px;top:634px">л/с №2011067057</div>
<div class="ftx" style="left:551px;top:634px">Кв. 10</div>
<div class="ftx" style="left:798px;top:634px">Смирнова Наталья Владимир...</div>
<div class="ftx" style="left:1021px;top:634px">01.01.2018</div>
<!-- bottom -->
<div class="lbl" style="left:210px;top:687px">Ответственный:</div>
<div class="fld" style="left:309px;top:682px;width:998px"></div>
<div class="fdiv" style="left:1264px;top:683px;height:23px"></div>
<div class="fdiv" style="left:1285px;top:683px;height:23px"></div>
<div class="ftx" style="left:313px;top:687px">Администратор</div>
<div class="tri" style="left:1271px;top:693px;border-width:4px 3.5px 0"></div>
<svg style="left:1292px;top:690px" width="10" height="10"><rect x="3.6" y="0.6" width="5" height="5" fill="none" stroke="#3a3a3a" stroke-width="1.2"/><path d="M1.9 3.6H0.6V8.4H5.4V7" fill="none" stroke="#3a3a3a" stroke-width="1.2"/></svg>
<div class="lbl" style="left:210px;top:721px">Комментарий:</div>
<div class="fld" style="left:309px;top:716px;width:998px"></div>

</body></html>
